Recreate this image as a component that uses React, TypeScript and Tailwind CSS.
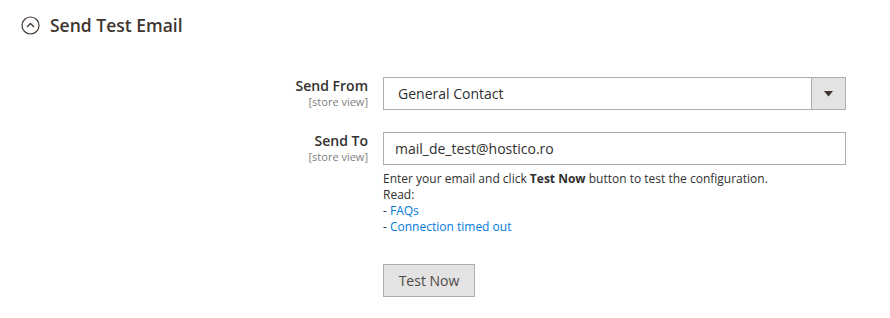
const Field = ({ label, children }: { label: string; children: React.ReactNode }) => (
  <div className="flex items-start">
    <div className="w-[347px] text-right pt-[0px]">
      <div className="text-[14px] leading-[18px] font-semibold text-[#303030]">{label}</div>
      <div className="text-[11px] leading-[14px] text-[#808080]">[store view]</div>
    </div>
    <div className="ml-[15px] w-[463px]">{children}</div>
  </div>
);

export default function App() {
  return (
    <div className="w-[890px] h-[318px] bg-white px-[21px] pt-[16px] font-['Open_Sans',sans-serif]">
      <div className="flex items-center gap-[10px] h-[19px]">
        <svg width="19" height="19" viewBox="0 0 19 19" fill="none" stroke="#41362f">
          <circle cx="9.5" cy="9.5" r="8.5" strokeWidth="1.2" />
          <path d="M6 11 L9.5 7.5 L13 11" strokeWidth="1.3" />
        </svg>
        <h2 className="text-[17.5px] font-semibold text-[#41362f] leading-[19px]">Send Test Email</h2>
      </div>

      <div className="mt-[42px]">
        <Field label="Send From">
          <div className="flex h-[33px] border border-[#adadad] bg-white">
            <div className="flex-1 flex items-center pl-[14px] text-[14px] text-[#303030]">General Contact</div>
            <div className="w-[34px] border-l border-[#adadad] bg-[#e3e3e3] flex items-center justify-center">
              <svg width="9" height="6" viewBox="0 0 9 6">
                <path d="M0 0 H9 L4.5 5.5 Z" fill="#41362f" />
              </svg>
            </div>
          </div>
        </Field>

        <div className="mt-[22px]">
          <Field label="Send To">
            <div className="flex items-center h-[33px] border border-[#adadad] bg-white pl-[11px] text-[14px] text-[#303030]">
              mail_de_test@hostico.ro
            </div>
            <div className="mt-[6px] text-[12px] leading-[16px] text-[#303030]">
              <div>
                Enter your email and click <b className="font-bold">Test Now</b> button to test the configuration.
              </div>
              <div>Read:</div>
              <div>
                - <a className="text-[#007bdb]">FAQs</a>
              </div>
              <div>
                - <a className="text-[#007bdb]">Connection timed out</a>
              </div>
            </div>
            <button className="mt-[29px] w-[92px] h-[33px] border border-[#adadad] bg-[#e3e3e3] text-[14px] text-[#514943]">
              Test Now
            </button>
          </Field>
        </div>
      </div>
    </div>
  );
}
